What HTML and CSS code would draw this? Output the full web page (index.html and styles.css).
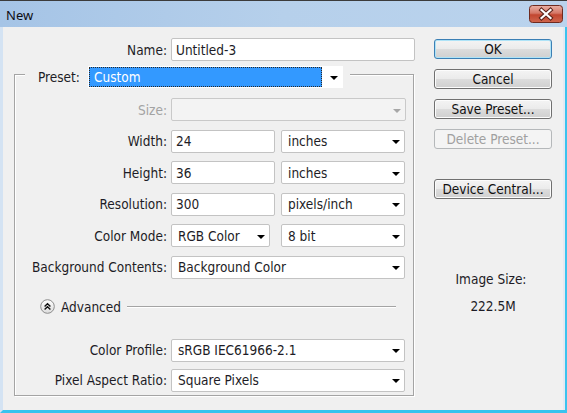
FILE: index.html
```html
<!DOCTYPE html>
<html>
<head>
<meta charset="utf-8">
<title>New</title>
<link rel="stylesheet" href="styles.css">
</head>
<body>
<div class="window">
  <div class="titlebar">
    <span class="title">New</span>
    <span class="close">
      <svg width="34" height="18" viewBox="0 0 34 18">
        <defs>
          <linearGradient id="cg" x1="0" y1="0" x2="0" y2="1">
            <stop offset="0" stop-color="#e9b1a6"/>
            <stop offset="0.45" stop-color="#d57766"/>
            <stop offset="0.55" stop-color="#c24630"/>
            <stop offset="1" stop-color="#d0674f"/>
          </linearGradient>
        </defs>
        <rect x="0.5" y="0.5" width="33" height="17" rx="3" fill="url(#cg)" stroke="#6e2b20"/>
        <path d="M12.5 5 L21.5 13 M21.5 5 L12.5 13" stroke="#5a2218" stroke-width="4.2" stroke-linecap="square"/>
        <path d="M12.5 5 L21.5 13 M21.5 5 L12.5 13" stroke="#ffffff" stroke-width="2.2" stroke-linecap="square"/>
      </svg>
    </span>
  </div>
  <div class="client">
    <div class="main">
      <div class="name-row">
        <span class="lbl">Name:</span>
        <div class="field input name-input">Untitled-3</div>
      </div>
      <fieldset class="group">
        <legend class="preset">
          <div class="preset-inner">
            <span class="preset-lbl">Preset:</span>
            <div class="preset-select">
              <span class="preset-value">Custom</span>
              <span class="preset-arrow"><i class="arrow"></i></span>
            </div>
          </div>
        </legend>
        <div class="rows">
          <div class="row">
            <span class="lbl disabled">Size:</span>
            <div class="field select size-select disabled"><span></span><i class="arrow gray"></i></div>
          </div>
          <div class="row">
            <span class="lbl">Width:</span>
            <div class="pair">
              <div class="field input num">24</div>
              <div class="field select unit"><span>inches</span><i class="arrow"></i></div>
            </div>
          </div>
          <div class="row">
            <span class="lbl">Height:</span>
            <div class="pair">
              <div class="field input num">36</div>
              <div class="field select unit"><span>inches</span><i class="arrow"></i></div>
            </div>
          </div>
          <div class="row">
            <span class="lbl">Resolution:</span>
            <div class="pair">
              <div class="field input num">300</div>
              <div class="field select unit"><span>pixels/inch</span><i class="arrow"></i></div>
            </div>
          </div>
          <div class="row">
            <span class="lbl">Color Mode:</span>
            <div class="pair wide-gap">
              <div class="field select mode"><span>RGB Color</span><i class="arrow"></i></div>
              <div class="field select unit"><span>8 bit</span><i class="arrow"></i></div>
            </div>
          </div>
          <div class="row">
            <span class="lbl">Background Contents:</span>
            <div class="field select full"><span>Background Color</span><i class="arrow"></i></div>
          </div>
        </div>
        <div class="advanced">
          <svg class="adv-icon" width="15" height="15" viewBox="0 0 15 15">
            <defs>
              <linearGradient id="ag" x1="0" y1="0" x2="0" y2="1">
                <stop offset="0" stop-color="#ffffff"/>
                <stop offset="1" stop-color="#dcdcdc"/>
              </linearGradient>
            </defs>
            <circle cx="7.5" cy="7.5" r="6.8" fill="url(#ag)" stroke="#8c8c8c"/>
            <path d="M4.6 7.4 L7.5 4.7 L10.4 7.4 M4.6 10.4 L7.5 7.7 L10.4 10.4" fill="none" stroke="#111" stroke-width="1.4"/>
          </svg>
          <span class="adv-text">Advanced</span>
          <span class="adv-line"></span>
        </div>
        <div class="rows adv-rows">
          <div class="row">
            <span class="lbl">Color Profile:</span>
            <div class="field select full"><span>sRGB IEC61966-2.1</span><i class="arrow"></i></div>
          </div>
          <div class="row">
            <span class="lbl">Pixel Aspect Ratio:</span>
            <div class="field select full"><span>Square Pixels</span><i class="arrow"></i></div>
          </div>
        </div>
      </fieldset>
    </div>
    <div class="side">
      <button class="btn default">OK</button>
      <button class="btn">Cancel</button>
      <button class="btn">Save Preset...</button>
      <button class="btn" disabled>Delete Preset...</button>
      <button class="btn device">Device Central...</button>
      <div class="info info-label">Image Size:</div>
      <div class="info info-value">222.5M</div>
    </div>
  </div>
</div>
</body>
</html>
```

FILE: styles.css
```css
* { box-sizing: border-box; }
html, body { margin: 0; padding: 0; }
body {
  width: 567px;
  height: 413px;
  overflow: hidden;
  font-family: "DejaVu Sans Condensed", "DejaVu Sans", sans-serif;
  font-stretch: condensed;
  font-size: 13.5px;
  color: #1d1c26;
  background: #f0f0f0;
}
.window {
  width: 567px;
  height: 413px;
  display: flex;
  flex-direction: column;
}
.titlebar {
  height: 27px;
  flex: none;
  display: flex;
  align-items: center;
  justify-content: space-between;
  padding: 0 4px 0 6px;
  border-top: 1px solid #3b3b3b;
  background: linear-gradient(to right, #a5c4e6, #b6d0eb 50%, #bad3ed);
}
.title {
  font-family: "Noto Sans", sans-serif;
  font-stretch: normal;
  font-size: 13px;
  color: #0e0e14;
  padding-top: 1px;
}
.close { display: flex; width: 34px; height: 18px; }
.client {
  flex: 1;
  display: flex;
  background: #f0f0f0;
  border-left: 3px solid #d4e3f3;
  border-right: 2px solid #3ac3ee;
  border-bottom: 3px solid #3ac3ee;
  box-shadow: inset -2px 0 0 #e2eaf3;
}
.main { width: 420px; flex: none; }

.lbl { text-align: right; white-space: nowrap; }
.lbl.disabled { color: #a3a3a3; }

.name-row {
  display: grid;
  grid-template-columns: 164px 244px;
  column-gap: 4px;
  align-items: center;
  margin-top: 11px;
}

.field {
  height: 23px;
  background: #fff;
  border: 1px solid #c3c3c3;
  border-radius: 2px;
  display: flex;
  align-items: center;
  white-space: nowrap;
}
.input { padding-left: 4px; }
.select { padding: 0 4px 0 6px; justify-content: space-between; }
.select.disabled { background: #f3f3f3; border-color: #c9c9c9; }
.arrow {
  width: 0;
  height: 0;
  border-left: 4px solid transparent;
  border-right: 4px solid transparent;
  border-top: 4px solid #000;
  margin-top: 2px;
}
.arrow.gray { border-top-color: #a7a7a7; }

.group {
  margin: 0 0 0 11px;
  width: 400px;
  padding: 10px 0 3px 0;
  border: 1px solid #a4a4a4;
  box-shadow: inset 1px 1px 0 #fff, 1px 1px 0 #fff;
  min-width: 0;
}
.preset {
  margin-left: 10px;
  padding: 5px 7px 0 13px;
  background: #f0f0f0;
}
.preset-inner { display: flex; align-items: center; }
.preset-lbl { width: 50px; white-space: nowrap; }
.preset-select {
  width: 255px;
  height: 22px;
  background: #fff;
  padding: 1px 0 1px 1px;
  display: flex;
}
.preset-value {
  width: 233px;
  background: #3399ff;
  border: 1px dotted #2a2a2a;
  color: #fff;
  padding-left: 4px;
  display: flex;
  align-items: center;
}
.preset-arrow {
  flex: 1;
  display: flex;
  align-items: center;
  justify-content: center;
  padding-left: 3px;
}

.rows { display: flex; flex-direction: column; gap: 8.6px; }
.row {
  display: grid;
  grid-template-columns: 152px auto;
  column-gap: 4px;
  align-items: center;
}
.size-select { width: 235px; }
.full { width: 234px; }
.pair { display: flex; gap: 6px; }
.pair.wide-gap { gap: 11px; }
.num { width: 104px; }
.unit { width: 124px; }
.mode { width: 99px; }

.advanced {
  display: flex;
  align-items: center;
  height: 16px;
  margin: 20px 17px 0 25px;
  gap: 6px;
}
.adv-icon { flex: none; }
.adv-line {
  flex: 1;
  height: 2px;
  border-top: 1px solid #a4a4a4;
  border-bottom: 1px solid #fff;
  margin-top: 1px;
}
.adv-rows { margin-top: 24px; gap: 7px; }

.side {
  flex: 1;
  display: flex;
  flex-direction: column;
  padding: 12px 0 0 11px;
}
.btn {
  width: 118px;
  height: 20px;
  margin: 0 0 10px 0;
  padding: 0;
  font: inherit;
  color: #111;
  border: 1px solid #707070;
  border-radius: 3px;
  background: linear-gradient(#f4f4f4 0%, #ebebeb 48%, #dcdcdc 52%, #d0d0d0 100%);
  box-shadow: inset 0 0 0 1px #fcfcfc;
}
.btn.default {
  border-color: #3b7fb4;
  box-shadow: inset 0 0 0 1px #aee3f7;
}
.btn:disabled {
  color: #a0a0a0;
  border-color: #b5b8ba;
  background: #f4f4f4;
  box-shadow: none;
}
.btn.device { margin-top: 20px; }
.info { width: 118px; text-align: center; line-height: 16px; }
.info-label { margin-top: 62px; padding-right: 4px; }
.info-value { margin-top: 11px; }
```
